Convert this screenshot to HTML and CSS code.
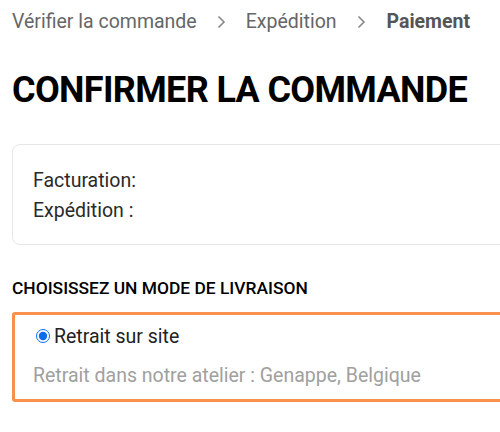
FILE: index.html
```html
<!DOCTYPE html>
<html lang="fr">

<head>
    <meta charset="UTF-8" />
    <meta name="viewport" content="width=device-width, initial-scale=1.0" />
    <title>Confirmer la commande</title>
    <link rel="stylesheet" href="styles.css">
</head>

<body>
    <div class="page">
        <nav class="breadcrumb">
            <span>Vérifier la commande</span>
            <svg class="sep" viewBox="0 0 9 14" width="9" height="14"><path d="M1.5 1.5 L7 7 L1.5 12.5" /></svg>
            <span>Expédition</span>
            <svg class="sep" viewBox="0 0 9 14" width="9" height="14"><path d="M1.5 1.5 L7 7 L1.5 12.5" /></svg>
            <span class="current">Paiement</span>
        </nav>

        <h1>CONFIRMER LA COMMANDE</h1>

        <div class="adresses">
            <p>Facturation:</p>
            <p>Expédition :</p>
        </div>

        <h2>CHOISISSEZ UN MODE DE LIVRAISON</h2>

        <div class="livraison">
            <label class="option">
                <input type="radio" name="livraison" checked />
                <span>Retrait sur site</span>
            </label>
            <p class="detail">Retrait dans notre atelier : Genappe, Belgique</p>
        </div>
    </div>
</body>

</html>
```

FILE: styles.css
```css
* {
    box-sizing: border-box;
}

html {
    overflow: hidden;
}

body {
    font-family: Roboto, 'Noto Sans', sans-serif;
    background: #fff;
    color: #222;
    margin: 0;
    padding: 0 0 0 12px;
}

.page {
    width: 560px;
}

.breadcrumb {
    display: flex;
    align-items: center;
    gap: 20px;
    font-size: 19.5px;
    color: #666;
    height: 42px;
}

.breadcrumb .sep {
    fill: none;
    stroke: #888;
    stroke-width: 1.6;
    margin-top: 2px;
}

.breadcrumb .current {
    font-weight: 700;
    color: #555;
    margin-left: 1px;
}

h1 {
    font-size: 36px;
    font-weight: 700;
    color: #000;
    margin: 27px 0 33px;
    line-height: 42px;
    letter-spacing: -0.65px;
}

.adresses {
    border: 1px solid #e6e6e6;
    border-radius: 8px;
    padding: 21px 20px 18px;
    font-size: 19.5px;
    color: #2a2a2a;
}

.adresses p {
    margin: 0;
    line-height: 30px;
}

h2 {
    font-size: 17.4px;
    font-weight: 500;
    color: #000;
    margin: 33px 0 14px;
    line-height: 20px;
}

.livraison {
    border: 3px solid #f7914d;
    border-radius: 3px;
    padding: 8px 18px 10px;
}

.option {
    display: flex;
    align-items: center;
    font-size: 19.5px;
    color: #222;
    height: 26px;
}

.option input {
    margin: 0 4px 0 3px;
    width: 14px;
    height: 14px;
    accent-color: #0b6cf0;
}

.detail {
    margin: 14px 0 0;
    font-size: 19.5px;
    color: #a0a0a0;
    line-height: 26px;
}
```
